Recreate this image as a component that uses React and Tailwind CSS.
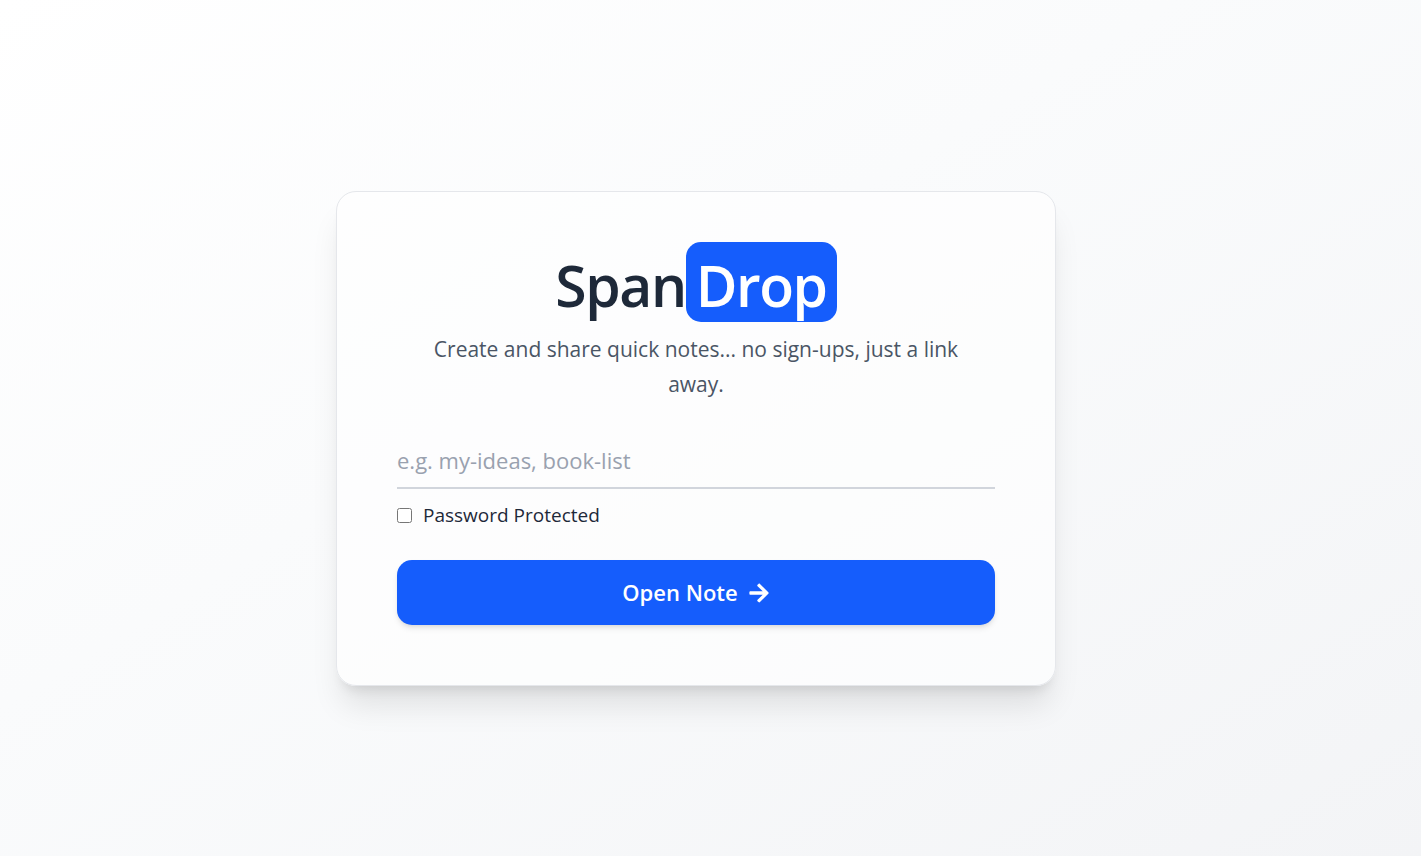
import { FaArrowRight } from "react-icons/fa";

export default function App() {
  return (
    <main className="flex min-h-screen items-center justify-center bg-linear-to-br from-white via-gray-50 to-gray-100 pt-[21px] pr-[29px] font-['Open_Sans','Noto_Sans',sans-serif] text-gray-800">
      <section className="w-full max-w-[720px] rounded-[20px] border border-gray-200 bg-white/60 px-[60px] pt-[50px] pb-[60px] shadow-[0_25px_31px_-6px_rgb(0_0_0/0.1),0_10px_12px_-7px_rgb(0_0_0/0.1)]">
        <h1 className="flex justify-center text-[57px] leading-[74px] font-semibold tracking-tight">
          <span className="pt-[6px]">Span</span>
          <span className="rounded-[15px] bg-[#155dfc] px-[10px] pt-[6px] text-white">Drop</span>
        </h1>
        <p className="mt-[10px] px-8 text-center text-[21px] leading-[35px] text-gray-600">
          Create and share quick notes... no sign-ups, just a link away.
        </p>
        <form className="mt-[30px] flex flex-col" onSubmit={(e) => e.preventDefault()}>
          <input
            type="text"
            aria-label="Note name"
            placeholder="e.g. my-ideas, book-list"
            className="h-[57px] w-full border-b-2 border-gray-300 bg-transparent text-[22px] outline-none placeholder:text-gray-400"
          />
          <label className="mt-[11px] flex items-center gap-[11px] text-[19px] leading-[30px]">
            <input type="checkbox" className="size-[15px]" />
            Password Protected
          </label>
          <button
            type="submit"
            className="mt-[30px] flex h-[65px] items-center justify-center gap-[10px] rounded-[15px] bg-[#155dfc] text-[22px] font-semibold text-white shadow-md"
          >
            Open Note
            <FaArrowRight aria-hidden="true" />
          </button>
        </form>
      </section>
    </main>
  );
}
